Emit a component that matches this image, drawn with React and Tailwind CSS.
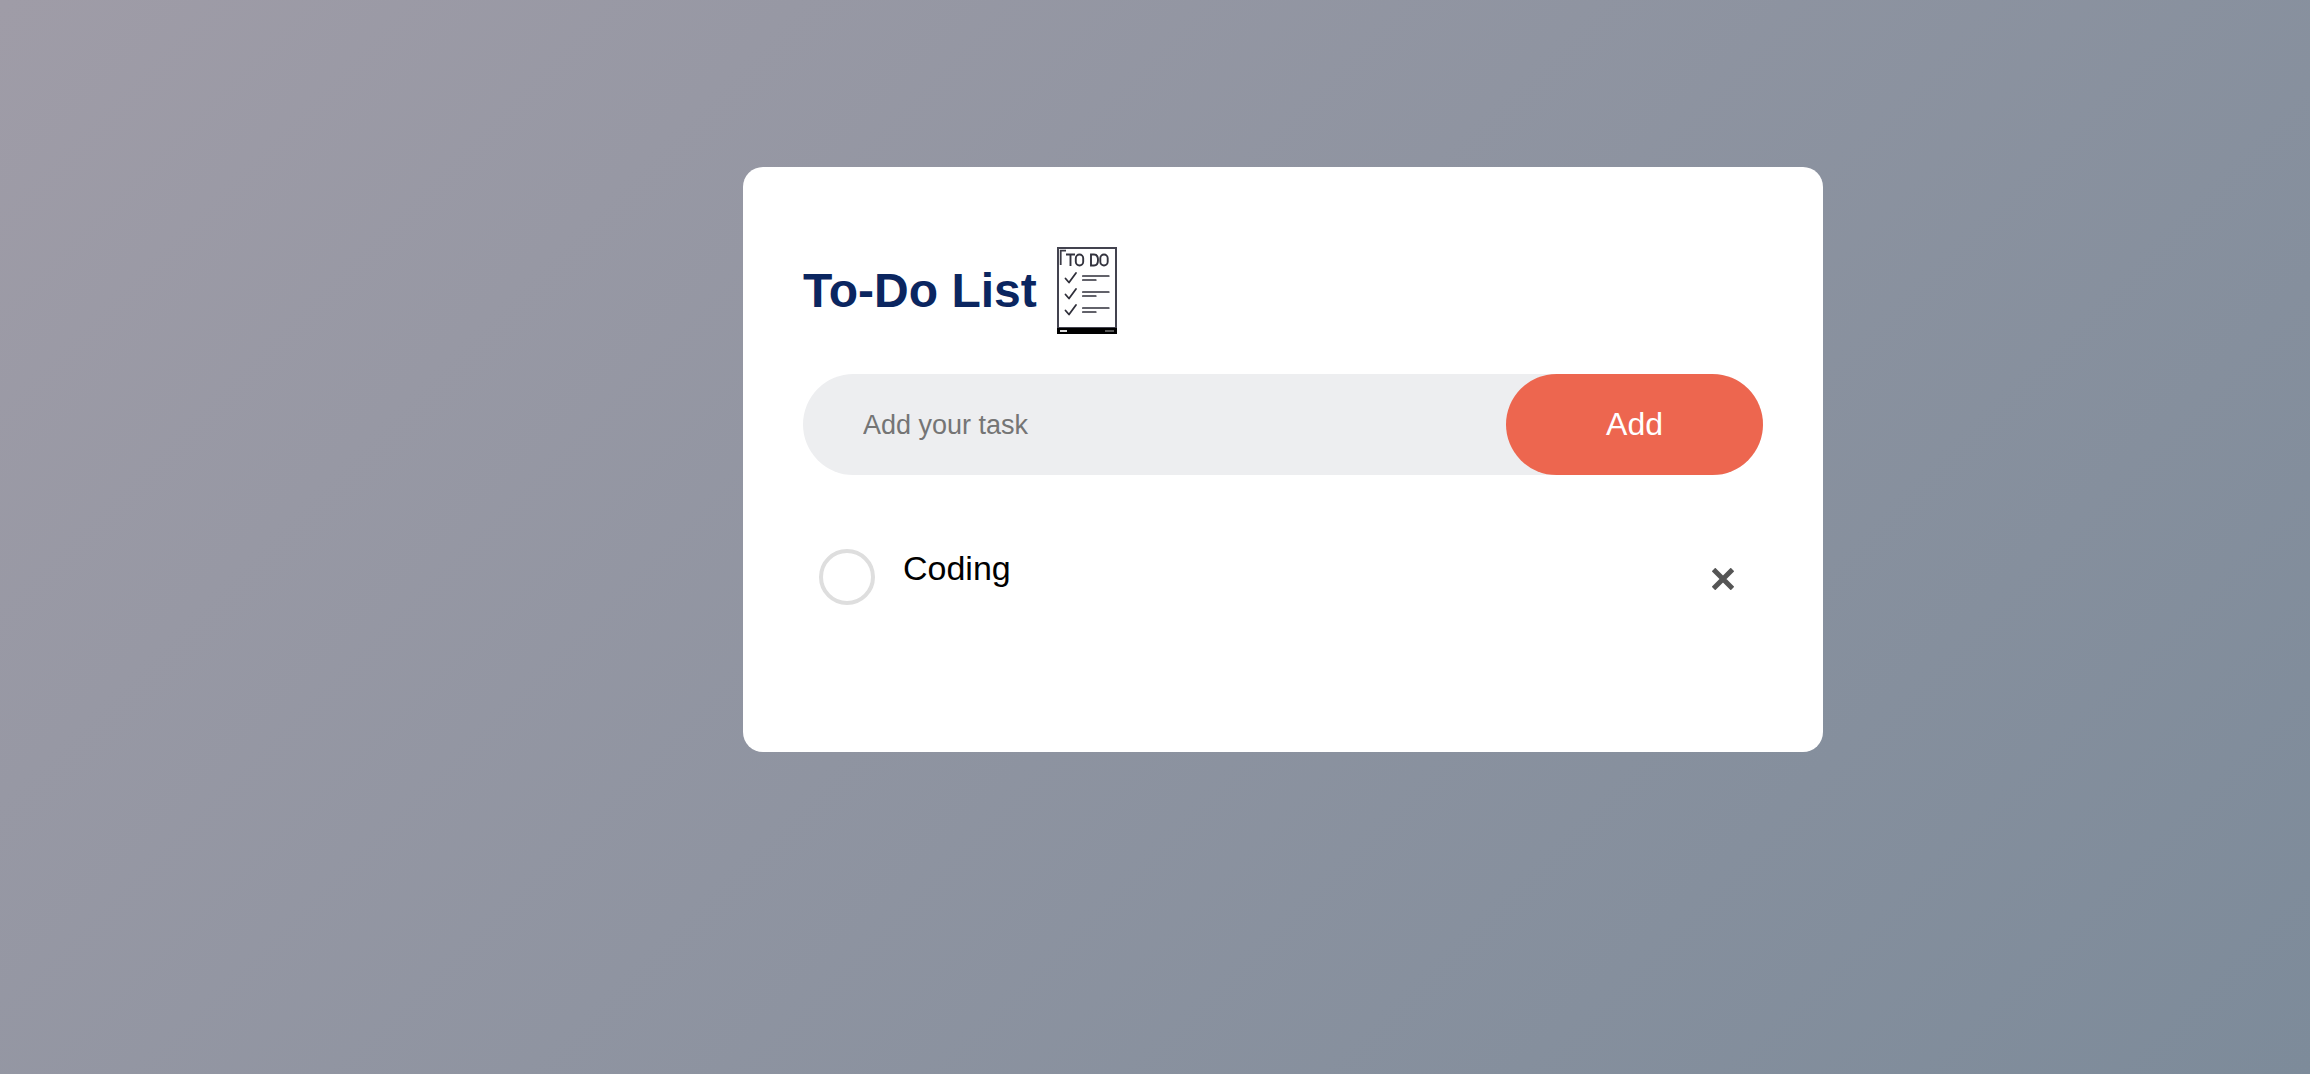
import { useState } from "react";

function ChecklistIcon() {
  return (
    <svg viewBox="0 0 60 87" className="h-[87px] w-[60px] shrink-0" fill="none" aria-hidden="true">
      <rect x="1" y="1" width="58" height="80" stroke="#43434f" strokeWidth="2" />
      <path d="M3.700 18V3.700H9" stroke="#3b3b46" strokeWidth="1.800" />
      <g stroke="#33333e" strokeWidth="1.900">
        <path d="M9 7.500h9M13.500 7.500v11.500" />
        <rect x="18.800" y="7.500" width="7.400" height="11" rx="3.700" />
        <path d="M34 7.500v11h3c2.500 0 4-2 4-5.500s-1.500-5.500-4-5.500z" />
        <rect x="43.300" y="7.500" width="7.400" height="11" rx="3.700" />
      </g>
      {[0, 16, 32].map((dy) => (
        <g key={dy} transform={`translate(0 ${dy})`} stroke="#2f2f3a" strokeLinecap="round" strokeLinejoin="round">
          <path d="M8.500 31.500l3.500 4 7-9.500" strokeWidth="1.800" />
          <path d="M25.800 29h26M25.800 33h13" strokeWidth="1.700" />
        </g>
      ))}
      <rect y="81" width="60" height="6" fill="#000" />
      <path d="M3 84h7" stroke="#ddd" strokeWidth="2" />
      <path d="M48 84h9" stroke="#777" strokeWidth="1.500" />
    </svg>
  );
}

function Task({ label }) {
  const [done, setDone] = useState(false);
  return (
    <li className="flex items-start pt-6 pb-4 pl-4">
      <label className="flex flex-1 items-start gap-7">
        <input
          type="checkbox"
          checked={done}
          onChange={() => setDone(!done)}
          className="mt-[10px] size-14 shrink-0 appearance-none rounded-full border-4 border-[#dedede] bg-white checked:bg-[#eb654e]"
        />
        <span className="mt-2 text-[34px] leading-[42px] text-black">{label}</span>
      </label>
      <button type="button" aria-label={`Delete ${label}`} className="flex size-20 items-center justify-center text-[#555]">
        <svg viewBox="0 0 22 22" className="size-[22px]" stroke="currentColor" strokeWidth="5" strokeLinecap="butt" aria-hidden="true">
          <path d="M1.500 1.500l19 19M20.500 1.500l-19 19" />
        </svg>
      </button>
    </li>
  );
}

export default function App() {
  return (
    <div className="min-h-screen bg-linear-135 from-[#9f9ca7] to-[#7d8b9a] pt-[167px] pr-[10px] pb-[167px] pl-[266px] font-['Liberation_Sans',Arial,sans-serif]">
      <main className="mx-auto w-full max-w-[1080px] rounded-[20px] bg-white px-[60px] pt-20 pb-[117px]">
        <h1 className="mb-10 flex items-center gap-5 text-[48px] leading-[56px] font-bold text-[#0b2660]">
          To-Do List
          <ChecklistIcon />
        </h1>
        <form className="mb-10 flex rounded-full bg-[#edeef0]" onSubmit={(e) => e.preventDefault()}>
          <input
            type="text"
            aria-label="Add your task"
            placeholder="Add your task"
            className="min-w-0 flex-1 bg-transparent pt-0.5 pl-[60px] text-[27px] outline-none placeholder:text-[#757575]"
          />
          <button type="submit" className="rounded-full bg-[#ed664f] px-[100px] py-[30px] text-[32px] leading-[41px] text-white">
            Add
          </button>
        </form>
        <ul>
          <Task label="Coding" />
        </ul>
      </main>
    </div>
  );
}
